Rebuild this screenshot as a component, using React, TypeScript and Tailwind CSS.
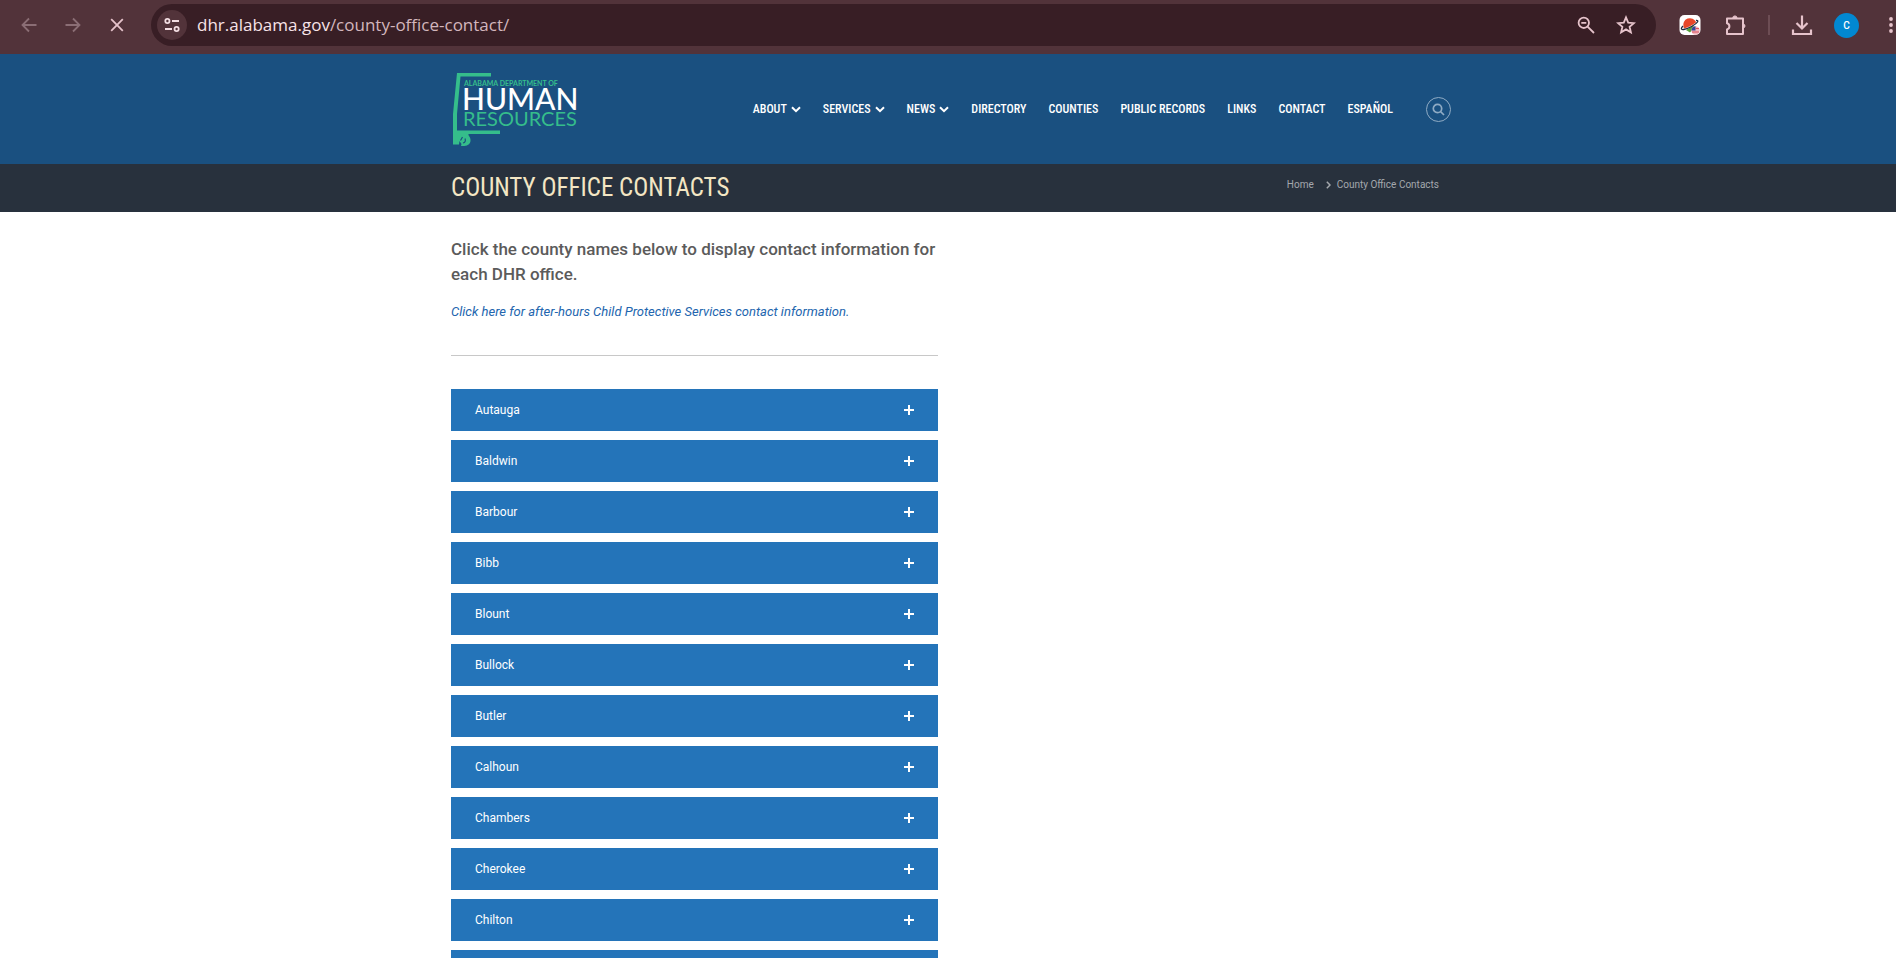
import { useState, type ReactNode } from "react";

const counties = [
  "Autauga", "Baldwin", "Barbour", "Bibb", "Blount", "Bullock",
  "Butler", "Calhoun", "Chambers", "Cherokee", "Chilton", "Choctaw",
];

const navItems = [
  { label: "ABOUT", menu: true },
  { label: "SERVICES", menu: true },
  { label: "NEWS", menu: true },
  { label: "DIRECTORY", menu: false },
  { label: "COUNTIES", menu: false },
  { label: "PUBLIC RECORDS", menu: false },
  { label: "LINKS", menu: false },
  { label: "CONTACT", menu: false },
  { label: "ESPAÑOL", menu: false },
];

function ToolButton({ label, children }: { label: string; children: ReactNode }) {
  return (
    <button type="button" aria-label={label} className="flex size-6 shrink-0 items-center justify-center">
      {children}
    </button>
  );
}

function BrowserBar() {
  return (
    <div className="flex h-[54px] shrink-0 items-start bg-[#52333a] pt-1 text-[#e6c3cb]">
      <div className="flex h-[42px] shrink-0 items-center gap-5 pl-[17px] text-[#8b6e75]">
        <ToolButton label="Back">
          <svg width="16" height="16" viewBox="0 0 16 16" fill="none" stroke="currentColor" strokeWidth="1.8">
            <path d="M15.5 8H2M8 1.5L1.5 8L8 14.5" />
          </svg>
        </ToolButton>
        <ToolButton label="Forward">
          <svg width="16" height="16" viewBox="0 0 16 16" fill="none" stroke="currentColor" strokeWidth="1.8">
            <path d="M0.5 8H14M8 1.5L14.5 8L8 14.5" />
          </svg>
        </ToolButton>
        <ToolButton label="Stop">
          <svg width="14" height="14" viewBox="0 0 14 14" fill="none" stroke="#e6c3cb" strokeWidth="1.8">
            <path d="M1.2 1.2L12.8 12.8M12.8 1.2L1.2 12.8" />
          </svg>
        </ToolButton>
      </div>
      <div className="ml-[22px] flex h-[42px] min-w-0 flex-1 items-center rounded-full bg-[#381e25] pr-[18px] pl-1.5">
        <button
          type="button"
          aria-label="Site information"
          className="flex size-[30px] shrink-0 items-center justify-center rounded-full bg-[#52333a]"
        >
          <svg width="16" height="16" viewBox="0 0 16 16" fill="none" stroke="#f3dde2" strokeWidth="1.8">
            <circle cx="3.4" cy="4" r="2.1" />
            <path d="M8 4H15M1 12H8" />
            <circle cx="12.6" cy="12" r="2.1" />
          </svg>
        </button>
        <p className="ml-2.5 min-w-0 flex-1 truncate font-['Open_Sans',sans-serif] text-[17px] text-[#f7e3e8]">
          dhr.alabama.gov<span className="text-[#d3b6bd]">/county-office-contact/</span>
        </p>
        <div className="flex items-center gap-4">
          <ToolButton label="Zoom">
            <svg width="18" height="18" viewBox="0 0 18 18" fill="none" stroke="currentColor" strokeWidth="1.8">
              <circle cx="6.8" cy="6.8" r="5.2" />
              <path d="M10.6 10.6L17 17M4.3 6.8H9.3" />
            </svg>
          </ToolButton>
          <ToolButton label="Bookmark">
            <svg width="20" height="20" viewBox="0 0 20 20" fill="none" stroke="currentColor" strokeWidth="1.8">
              <path d="M10 2.4L12.2 7.6L17.9 8.1L13.6 11.8L14.9 17.3L10 14.4L5.1 17.3L6.4 11.8L2.1 8.1L7.8 7.6Z" />
            </svg>
          </ToolButton>
        </div>
      </div>
      <div className="flex h-[42px] shrink-0 items-center pl-[22px]">
        <ToolButton label="Extension">
          <svg width="22" height="22" viewBox="0 0 22 22">
            <rect x="0.5" y="1" width="21" height="20" rx="5" fill="#fff" />
            <path d="M4.5 13A6.8 6.8 0 0 1 17.2 8.2C14 11 9 13.5 5 14.5Z" fill="#e8472a" />
            <path d="M7 16L15 11L14 15L11 18.5Z" fill="#57a23a" />
            <path d="M17 6.5C20.5 6 19 9 12.5 12.5C6 16 1.5 16.5 2.5 14C2.8 13.2 3.3 12.7 4 12" fill="none" stroke="#1f2b3f" strokeWidth="1.3" />
            <circle cx="16.5" cy="16.5" r="4.2" fill="#f2b6bd" />
            <path d="M12.5 16.5A4 4 0 0 1 16.5 12.3V16.5Z" fill="#35469c" />
            <path d="M16.5 14.5H20M13 18H20" stroke="#d8505f" />
          </svg>
        </ToolButton>
        <div className="ml-[22px] flex">
          <ToolButton label="Extensions">
            <svg width="22" height="22" viewBox="0 0 22 22" fill="none" stroke="currentColor" strokeWidth="2" strokeLinejoin="round">
              <path d="M2 4.5H18V20H2V15.4A3.2 3.2 0 0 0 2 9.2Z" />
              <path d="M7.8 4A2.1 2.1 0 0 1 12 4ZM18.5 10A2.1 2.1 0 0 1 18.5 14Z" fill="currentColor" strokeWidth="1" />
            </svg>
          </ToolButton>
        </div>
        <span className="mx-5 h-5 w-0.5 bg-[#6d4d54]" />
        <ToolButton label="Downloads">
          <svg width="22" height="22" viewBox="0 0 22 22" fill="none" stroke="currentColor" strokeWidth="2.2">
            <path d="M11 1.5V14M5.5 9L11 14.5L16.5 9M2 15.5V20H20V15.5" />
          </svg>
        </ToolButton>
        <button
          type="button"
          aria-label="Profile"
          className="ml-5 flex size-[25px] items-center justify-center rounded-full bg-[#0288d1] font-['Roboto',sans-serif] text-[10px] font-medium text-white"
        >
          C
        </button>
        <button type="button" aria-label="Menu" className="ml-[30px] pr-[3px]">
          <svg width="4" height="16" viewBox="0 0 4 16" fill="currentColor">
            <circle cx="2" cy="2" r="1.9" />
            <circle cx="2" cy="8" r="1.9" />
            <circle cx="2" cy="14" r="1.9" />
          </svg>
        </button>
      </div>
    </div>
  );
}

function Logo() {
  return (
    <a href="#home" aria-label="Alabama Department of Human Resources" className="shrink-0">
      <svg width="130" height="76" viewBox="0 -1 130 76" className="font-['Lato',sans-serif]">
        <path
          d="M6 1H40V4.5H9.5L6 42V58.5H49V62H17.5C17 64 20 65 19.5 69C19 73 15 74.5 10 74L10.5 72L8.5 69L8 72.5H2V42Z"
          fill="#35bd8b"
        />
        <path d="M11.5 65L9.5 68.5M14 66.5C15 69 14 70.5 12 71" fill="none" stroke="#1a5080" strokeWidth="1.2" />
        <text x="13" y="14" fontSize="7" fontWeight="700" fill="#35bd8b">ALABAMA DEPARTMENT OF</text>
        <text x="11" y="38" fontSize="30" fontWeight="500" fill="#fff">HUMAN</text>
        <text x="12" y="54" fontSize="20" fill="#35bd8b">RESOURCES</text>
      </svg>
    </a>
  );
}

function SiteHeader() {
  return (
    <header className="bg-[#1a5080]">
      <div className="mx-auto flex h-[110px] max-w-[1006px] items-center justify-between pl-1.5">
        <Logo />
        <div className="flex items-center gap-[33px]">
          <nav aria-label="Main" className="flex items-center gap-[22px] font-['Roboto_Condensed','Liberation_Sans_Narrow',sans-serif] text-xs font-medium text-white">
            {navItems.map((item) => (
              <a key={item.label} href="#" className="flex items-center gap-1 whitespace-nowrap">
                {item.label}
                {item.menu && (
                  <svg width="10" height="7" viewBox="0 0 10 7" fill="none" stroke="currentColor" strokeWidth="2">
                    <path d="M1 1.2L5 5.2L9 1.2" />
                  </svg>
                )}
              </a>
            ))}
          </nav>
          <button
            type="button"
            aria-label="Search"
            className="flex size-[25px] items-center justify-center rounded-full border border-[#8fabc4] text-[#8fabc4]"
          >
            <svg width="13" height="13" viewBox="0 0 13 13" fill="none" stroke="currentColor" strokeWidth="1.7">
              <circle cx="5.5" cy="5.5" r="4.2" />
              <path d="M8.5 8.5L12 12" />
            </svg>
          </button>
        </div>
      </div>
    </header>
  );
}

function TitleBar() {
  return (
    <div className="bg-[#28313d]">
      <div className="mx-auto flex h-12 max-w-[1006px] items-center justify-between pr-3 pl-1.5">
        <h1 className="font-['Roboto_Condensed','Liberation_Sans_Narrow',sans-serif] text-[25px] leading-8 text-[#f3e6c4]">
          COUNTY OFFICE CONTACTS
        </h1>
        <nav aria-label="Breadcrumb" className="flex items-center pb-1.5 text-[10px] leading-4 text-[#a4a8ad]">
          <a href="#home">Home</a>
          <svg width="5" height="8" viewBox="0 0 5 8" fill="none" stroke="currentColor" strokeWidth="1.5" className="mr-1.5 ml-3">
            <path d="M0.8 0.8L4 4L0.8 7.2" />
          </svg>
          <span>County Office Contacts</span>
        </nav>
      </div>
    </div>
  );
}

function CountyRow({ name }: { name: string }) {
  const [open, setOpen] = useState(false);
  return (
    <li>
      <button
        type="button"
        aria-expanded={open}
        onClick={() => setOpen(!open)}
        className="flex h-[42px] w-full items-center justify-between bg-[#2474b9] pr-6 pl-6 text-left text-xs text-white"
      >
        {name}
        <svg width="10" height="10" viewBox="0 0 10 10" stroke="currentColor" strokeWidth="2">
          <path d={open ? "M0 5H10" : "M0 5H10M5 0V10"} />
        </svg>
      </button>
    </li>
  );
}

export default function App() {
  return (
    <div className="flex h-screen flex-col overflow-hidden bg-white font-['Roboto',sans-serif]">
      <BrowserBar />
      <div className="min-h-0 flex-1 overflow-hidden">
        <SiteHeader />
        <TitleBar />
        <main className="mx-auto max-w-[1006px] pt-[25px] pl-1.5">
          <div className="max-w-[487px]">
            <h2 className="text-[17px] leading-[25px] font-medium text-[#5b5b5b]">
              Click the county names below to display contact information for each DHR office.
            </h2>
            <p className="mt-[15px] text-[13px] leading-5 italic">
              <a href="#after-hours" className="text-[#2265ae]">
                Click here for after-hours Child Protective Services contact information.
              </a>
            </p>
            <hr className="mt-[33px] border-[#c8c8c8]" />
            <ul className="mt-[33px] flex flex-col gap-[9px]">
              {counties.map((name) => (
                <CountyRow key={name} name={name} />
              ))}
            </ul>
          </div>
        </main>
      </div>
    </div>
  );
}
